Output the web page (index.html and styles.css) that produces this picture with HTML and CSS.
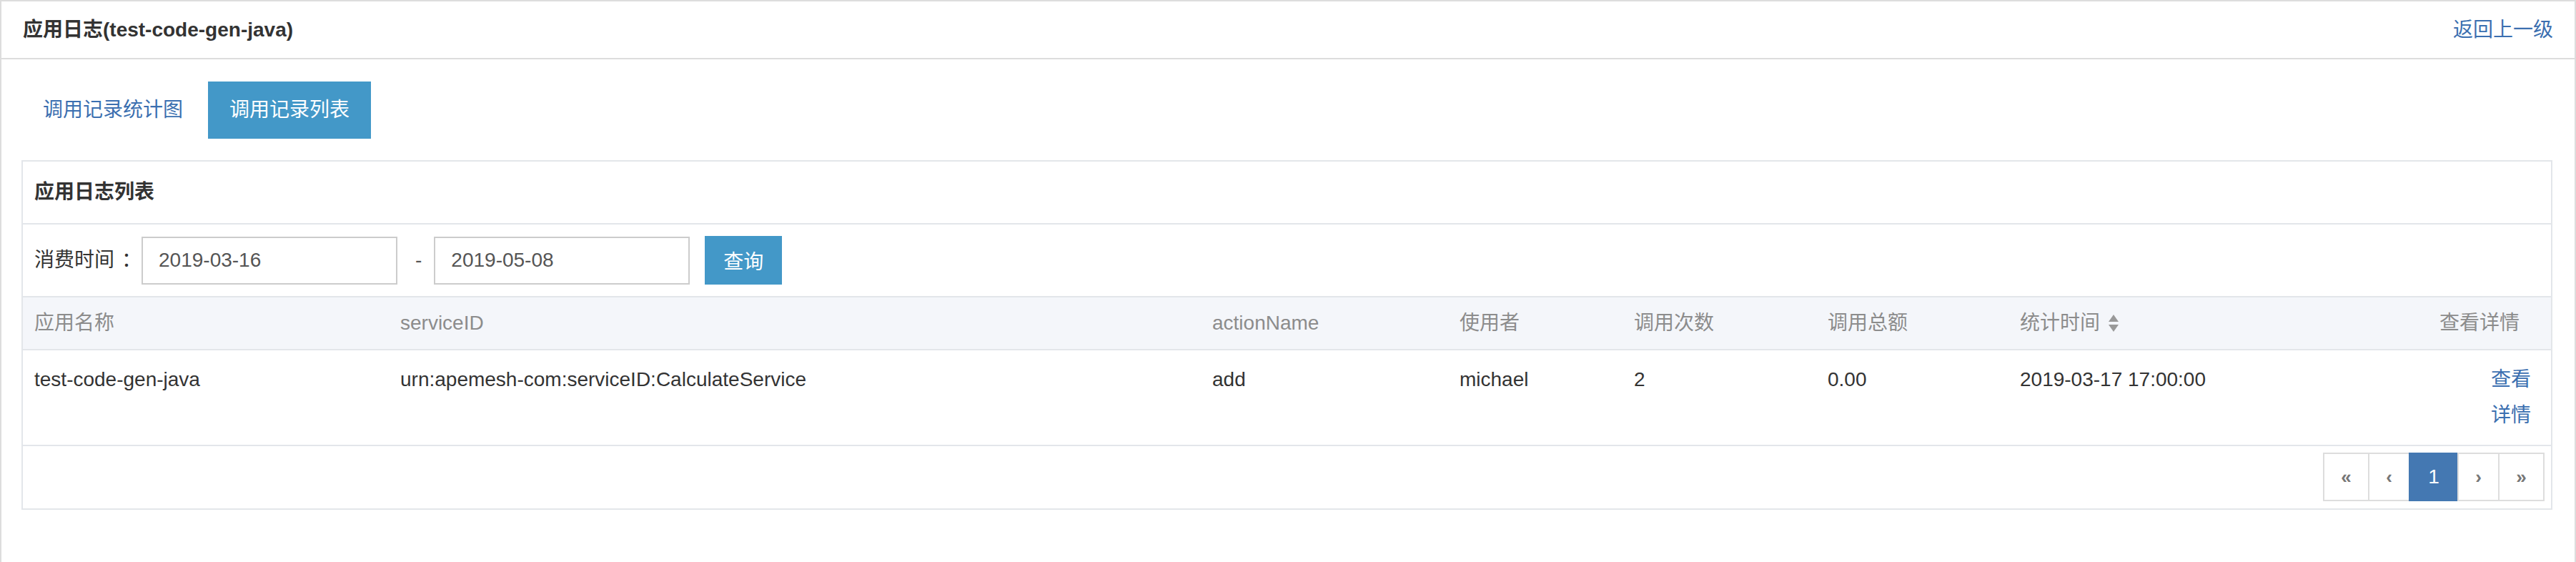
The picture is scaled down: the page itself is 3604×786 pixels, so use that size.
FILE: index.html
```html
<!DOCTYPE html>
<html lang="zh-CN">
<head>
<meta charset="utf-8">
<title>应用日志</title>
<link rel="stylesheet" href="styles.css">
</head>
<body>
<div class="page">
  <div class="page-header">
    <span class="page-title">应用日志(test-code-gen-java)</span>
    <a class="back-link" href="#">返回上一级</a>
  </div>
  <div class="page-body">
    <ul class="tabs">
      <li class="tab"><a href="#">调用记录统计图</a></li>
      <li class="tab active"><a href="#">调用记录列表</a></li>
    </ul>
    <div class="panel">
      <div class="panel-heading">应用日志列表</div>
      <div class="filter">
        <span class="filter-label">消费时间<span class="colon">：</span></span>
        <input class="date-input" type="text" value="2019-03-16">
        <span class="dash">-</span>
        <input class="date-input" type="text" value="2019-05-08">
        <button class="btn-query" type="button">查询</button>
      </div>
      <table class="log-table">
        <colgroup>
          <col class="c1"><col class="c2"><col class="c3"><col class="c4"><col class="c5"><col class="c6"><col class="c7">
        </colgroup>
        <thead>
          <tr>
            <th>应用名称</th>
            <th>serviceID</th>
            <th>actionName</th>
            <th>使用者</th>
            <th>调用次数</th>
            <th>调用总额</th>
            <th>统计时间<svg class="sort-icon" width="16" height="26" viewBox="0 0 16 26"><polygon points="8,1 15,11 1,11" fill="#999"/><polygon points="1,15 15,15 8,25" fill="#999"/></svg></th>
            <th class="th-detail">查看详情</th>
          </tr>
        </thead>
        <tbody>
          <tr>
            <td>test-code-gen-java</td>
            <td>urn:apemesh-com:serviceID:CalculateService</td>
            <td>add</td>
            <td>michael</td>
            <td>2</td>
            <td>0.00</td>
            <td>2019-03-17 17:00:00</td>
            <td class="td-detail"><a class="detail-link" href="#">查看详情</a></td>
          </tr>
        </tbody>
      </table>
      <div class="pager-row">
        <ul class="pager">
          <li class="pg pg-wide"><a href="#">«</a></li>
          <li class="pg"><a href="#">‹</a></li>
          <li class="pg pg-active"><a href="#">1</a></li>
          <li class="pg"><a href="#">›</a></li>
          <li class="pg pg-wide"><a href="#">»</a></li>
        </ul>
      </div>
    </div>
  </div>
</div>
</body>
</html>
```
FILE: styles.css
```css
* { box-sizing: border-box; }
html, body { margin: 0; padding: 0; background: #fff; }
body {
  font-family: "Liberation Sans", "Noto Sans CJK SC", sans-serif;
  font-size: 28px;
  line-height: 40px;
  color: #333;
}
a { text-decoration: none; color: #3b6fb0; }
ul { list-style: none; margin: 0; padding: 0; }

.page {
  width: 3604px;
  height: 800px;
  border: 2px solid #ddd;
}
.page-header {
  display: flex;
  justify-content: space-between;
  align-items: center;
  padding: 20px 30px 19px 30px;
  border-bottom: 2px solid #ddd;
}
.page-title { font-weight: bold; color: #333; }
.back-link { color: #3b6fb0; }

.page-body { padding: 31px 31px 0 28px; }

.tabs { display: flex; margin-bottom: 30px; }
.tab a {
  display: block;
  padding: 20px 30px;
  color: #3b6fb0;
}
.tab + .tab { margin-left: 5px; }
.tab.active a { background: #4398c8; color: #fff; }

.panel { border: 2px solid #e3e6ea; }
.panel-heading {
  padding: 23px 16px;
  font-weight: bold;
  color: #333;
  border-bottom: 2px solid #e3e6ea;
}
.filter {
  display: flex;
  align-items: center;
  padding: 16px 16px;
}
.filter-label { display: flex; align-items: center; color: #333; }
.colon {
  display: inline-block;
  width: 28px;
  margin-left: 10px;
  text-align: left;
}
.date-input {
  width: 358px;
  height: 67px;
  border: 2px solid #ccc;
  padding: 0 22px;
  font-family: "Liberation Sans", "Noto Sans CJK SC", sans-serif;
  font-size: 28px;
  color: #555;
  outline: none;
  margin: 0;
}
.dash { margin: 0 17px 0 25px; color: #555; }
.btn-query {
  margin-left: 21px;
  height: 68px;
  padding: 0 26px;
  border: 0;
  background: #4398c8;
  color: #fff;
  font-family: "Liberation Sans", "Noto Sans CJK SC", sans-serif;
  font-size: 28px;
}

.log-table {
  width: 100%;
  table-layout: fixed;
  border-collapse: collapse;
}
.c1 { width: 512px; }
.c2 { width: 1136px; }
.c3 { width: 346px; }
.c4 { width: 244px; }
.c5 { width: 271px; }
.c6 { width: 269px; }
.c7 { width: 340px; }
.log-table th {
  text-align: left;
  font-weight: normal;
  color: #8c8c8c;
  background: #f4f6fa;
  padding: 16px 16px;
  line-height: 40px;
  border-top: 2px solid #e3e6ea;
  border-bottom: 2px solid #e3e6ea;
  white-space: nowrap;
}
.sort-icon { margin-left: 11px; vertical-align: -4px; }
.log-table th.th-detail { text-align: right; padding-right: 44px; }
.log-table td {
  padding: 16px 16px;
  line-height: 50px;
  vertical-align: top;
  color: #333;
  border-bottom: 2px solid #e3e6ea;
}
.log-table td.td-detail { text-align: right; padding-right: 28px; }
.detail-link { display: inline-block; width: 2em; text-align: left; color: #3b6fb0; }

.pager-row {
  display: flex;
  justify-content: flex-end;
  padding: 9px 9px 10px;
}
.pager { display: flex; }
.pg a {
  display: block;
  width: 59px;
  height: 68px;
  line-height: 64px;
  text-align: center;
  border: 2px solid #ddd;
  margin-left: -2px;
  color: #777;
  font-weight: bold;
  font-size: 26px;
  background: #fff;
}
.pg-wide a { width: 65px; }
.pg:first-child a { margin-left: 0; }
.pg-active a {
  width: 70px;
  background: #4478b2;
  border-color: #4478b2;
  color: #fff;
  font-weight: normal;
  font-size: 28px;
}
```
